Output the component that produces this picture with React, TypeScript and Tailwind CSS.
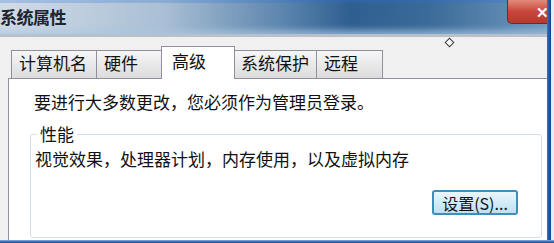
import React from "react";

const font = { fontFamily: '"Noto Sans CJK SC", "Noto Sans", sans-serif' };

function Tab({ label, w, selected }: { label: string; w: number; selected?: boolean }) {
  if (selected) {
    return (
      <div
        className="relative z-10 -mb-[1px] -mx-[2px] flex h-[33px] items-start border border-b-0 border-[#8e9199] bg-white pl-[10px] pt-[3px] text-[17px] leading-[22px] text-[#111]"
        style={{ width: w }}
      >
        {label}
      </div>
    );
  }
  return (
    <div
      className="flex h-[28px] items-start border border-b-0 border-r-0 border-[#8e9199] bg-gradient-to-b from-[#f6f6f6] to-[#dcdcdc] pl-[7px] pt-[1px] text-[17px] leading-[22px] text-[#111] last:border-r"
      style={{ width: w }}
    >
      {label}
    </div>
  );
}

export default function App() {
  return (
    <div className="relative flex h-[243px] w-[554px] flex-col overflow-hidden bg-[#f0f0f0]" style={font}>
      <div className="flex min-h-0 flex-1">
        {/* main column */}
        <div className="flex min-w-0 flex-1 flex-col">
          {/* title bar */}
          <div className="flex h-[34px] shrink-0 items-start justify-between bg-[linear-gradient(to_right,#d2dce7_0%,#a9bfd4_30%,#5b84ad_52%,#2f5f90_64%,#3a6a98_78%,#6f98be_100%)] shadow-[inset_0_-7px_6px_-3px_rgba(170,198,224,0.7),inset_0_3px_0_0_rgba(44,111,216,0.25)]">
            <div className="pt-[6px] text-[17px] font-bold leading-[22px] tracking-[-0.5px] text-[#1b2430]">系统属性</div>
            <div className="flex h-[24px] w-[40px] items-center justify-end rounded-bl-[5px] border border-t-0 border-r-0 border-[#6b2a25] bg-gradient-to-b from-[#e08b7c] via-[#c8453a] to-[#b83a2c]">
              <span className="-mr-[2px] text-[15px] font-bold leading-none text-white">✕</span>
            </div>
          </div>
          <div className="h-[3px] shrink-0 bg-[#b8c1ca]" />

          {/* tabs */}
          <div className="ml-[11px] mt-[9px] flex items-end">
            <Tab label="计算机名" w={85} />
            <Tab label="硬件" w={67} />
            <Tab label="高级" w={74} selected />
            <Tab label="系统保护" w={83} />
            <Tab label="远程" w={67} />
          </div>

          {/* panel */}
          <div className="ml-[8px] flex-1 border border-b-0 border-r-0 border-[#8e9199] bg-white pl-[25px] pt-[12px]">
            <div className="text-[17px] leading-[22px] text-[#111]">要进行大多数更改，您必须作为管理员登录。</div>
            <div className="relative -ml-[4px] mt-[21px] flex h-[104px] w-[512px] flex-col rounded-[3px] border border-[#d5dfe5]">
              <div className="absolute -top-[12px] left-[6px] bg-white px-[3px] text-[17px] leading-[22px] text-[#111]">性能</div>
              <div className="pl-[4px] pt-[13px] text-[17px] leading-[22px] text-[#111]">视觉效果，处理器计划，内存使用，以及虚拟内存</div>
              <div className="mb-[22px] mr-[23px] mt-auto flex justify-end">
                <div className="flex h-[25px] w-[86px] items-center justify-center rounded-[3px] border-2 border-[#3c8fb8] bg-gradient-to-b from-[#eaf6fc] to-[#bfe0f2] text-[16px] leading-none text-[#111]">
                  设置(S)...
                </div>
              </div>
            </div>
          </div>
        </div>
        {/* right border */}
        <div className="w-[4px] shrink-0 bg-gradient-to-r from-[#3a6fc2] to-[#123f8e]" />
        <div className="w-[3px] shrink-0 bg-[#e8eef6]" />
      </div>
      {/* bottom border */}
      <div className="h-[3px] shrink-0 bg-gradient-to-b from-[#7fb0e6] to-[#163f86]" />

      {/* mouse cursor */}
      <div className="absolute left-[446px] top-[39px] h-[7px] w-[7px] rotate-45 border border-[#333] bg-white" />
    </div>
  );
}
